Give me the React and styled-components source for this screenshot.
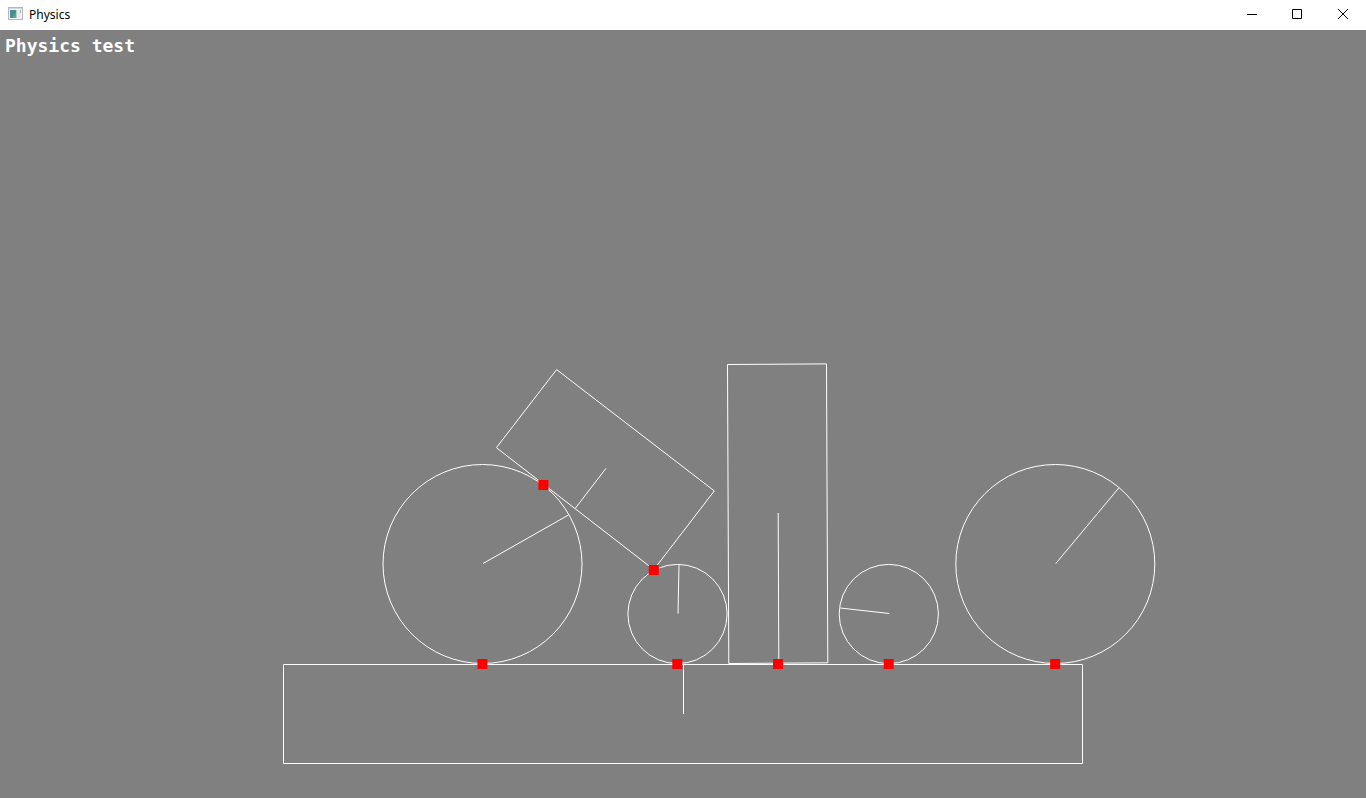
import React from "react";
import styled, { createGlobalStyle } from "styled-components";

const GlobalStyle = createGlobalStyle`
  body {
    margin: 0;
    background: #808080;
  }
`;

const Window = styled.div`
  display: flex;
  flex-direction: column;
  height: 100vh;
  background: #808080;
`;

const TitleBar = styled.header`
  display: flex;
  align-items: center;
  flex: none;
  height: 30px;
  padding-left: 8px;
  box-sizing: border-box;
  background: #fff;
`;

const AppIcon = styled.svg`
  display: block;
  width: 16px;
  height: 16px;
  margin: 0 5px 2px 0;
`;

const WindowTitle = styled.span`
  flex: 1;
  color: #000;
  font: 12px/30px "Noto Sans", sans-serif;
`;

const Controls = styled.div`
  display: flex;
`;

const ControlButton = styled.button`
  display: flex;
  align-items: center;
  justify-content: center;
  width: 46px;
  height: 30px;
  padding: 0 0 2px;
  border: 0;
  background: transparent;

  &:hover {
    background: ${({ $danger }) => ($danger ? "#e81123" : "#e5e5e5")};
  }
`;

const ControlIcon = styled.svg`
  display: block;
  width: 12px;
  height: 12px;
  fill: none;
  stroke: #000;
`;

const Stage = styled.main`
  display: grid;
  flex: 1;
  min-height: 0;
`;

const Heading = styled.h1`
  grid-area: 1 / 1;
  align-self: start;
  z-index: 1;
  margin: 0;
  padding: 4px 5px;
  color: #fff;
  font: bold 18px/24px "DejaVu Sans Mono", monospace;
`;

const Scene = styled.svg`
  grid-area: 1 / 1;
  display: block;
  width: 100%;
  height: 100%;
  min-height: 0;
`;

const Outline = styled.g`
  fill: none;
  stroke: #fff;
  stroke-width: 1;
`;

const Contact = styled.rect`
  width: 10px;
  height: 10px;
  fill: #f00;
`;

const circles = [
  { cx: 482.5, cy: 534, r: 99.5, x: 568.5, y: 485 },
  { cx: 677.5, cy: 584, r: 49.6, x: 679, y: 534.5 },
  { cx: 888.8, cy: 584, r: 49.6, x: 840.3, y: 578 },
  { cx: 1055.3, cy: 534, r: 99.5, x: 1119, y: 457.7 },
];

const boxes = [
  { points: "283.5,634.5 1082.5,634.5 1082.5,733.5 283.5,733.5", axis: "M683.5 634.5V684" },
  { points: "556.6,339.6 714.3,460.9 653.8,539.6 496.4,417.7", axis: "M606 438.3L575.3 478.3" },
  { points: "727.5,334.5 826.5,333.9 827.8,632.8 728.8,633.5", axis: "M778.2 483L778.8 633" },
];

const contacts = [
  [477.4, 629],
  [538.4, 450],
  [648.8, 535],
  [672.3, 629],
  [773, 629],
  [883.7, 629],
  [1050.2, 629],
];

export default function App() {
  return (
    <>
      <GlobalStyle />
      <Window>
        <TitleBar>
          <AppIcon viewBox="0 0 16 16" aria-hidden="true">
            <defs>
              <linearGradient id="pane" x1="0" y1="0" x2="1" y2="1">
                <stop offset="0" stopColor="#4c84a6" />
                <stop offset="0.5" stopColor="#43918c" />
                <stop offset="1" stopColor="#6fb08c" />
              </linearGradient>
            </defs>
            <rect x="0.5" y="1.5" width="14" height="12" fill="#f1f3f5" stroke="#b3b8be" />
            <path d="M1 2.5H14" stroke="#d3d8dd" />
            <rect x="2" y="4" width="6" height="8" fill="url(#pane)" />
            <rect x="8" y="4" width="1" height="8" fill="#b7d0cf" />
            <rect x="9" y="4" width="3" height="8" fill="#e6ecee" />
            <rect x="12" y="4" width="1" height="3" fill="#9fb5ab" />
          </AppIcon>
          <WindowTitle>Physics</WindowTitle>
          <Controls>
            <ControlButton type="button" aria-label="Minimize">
              <ControlIcon viewBox="0 0 12 12">
                <path d="M2 6.5H12" />
              </ControlIcon>
            </ControlButton>
            <ControlButton type="button" aria-label="Maximize">
              <ControlIcon viewBox="0 0 12 12">
                <path d="M1.5 1.5H10.5V10.5H1.5Z" />
              </ControlIcon>
            </ControlButton>
            <ControlButton type="button" aria-label="Close" $danger>
              <ControlIcon viewBox="0 0 12 12">
                <path d="M1 1L11 11M11 1L1 11" />
              </ControlIcon>
            </ControlButton>
          </Controls>
        </TitleBar>
        <Stage>
          <Heading>Physics test</Heading>
          <Scene
            viewBox="0 0 1366 768"
            preserveAspectRatio="xMidYMax meet"
            role="img"
            aria-label="Rigid bodies resting on the ground with their contact points"
          >
            <Outline>
              {boxes.map((box) => (
                <React.Fragment key={box.points}>
                  <polygon points={box.points} />
                  <path d={box.axis} />
                </React.Fragment>
              ))}
              {circles.map((c) => (
                <React.Fragment key={c.cx}>
                  <circle cx={c.cx} cy={c.cy} r={c.r} />
                  <path d={`M${c.cx + 0.5} ${c.cy - 0.5}L${c.x} ${c.y}`} />
                </React.Fragment>
              ))}
            </Outline>
            {contacts.map(([x, y]) => (
              <Contact key={`${x}-${y}`} x={x} y={y} />
            ))}
          </Scene>
        </Stage>
      </Window>
    </>
  );
}
